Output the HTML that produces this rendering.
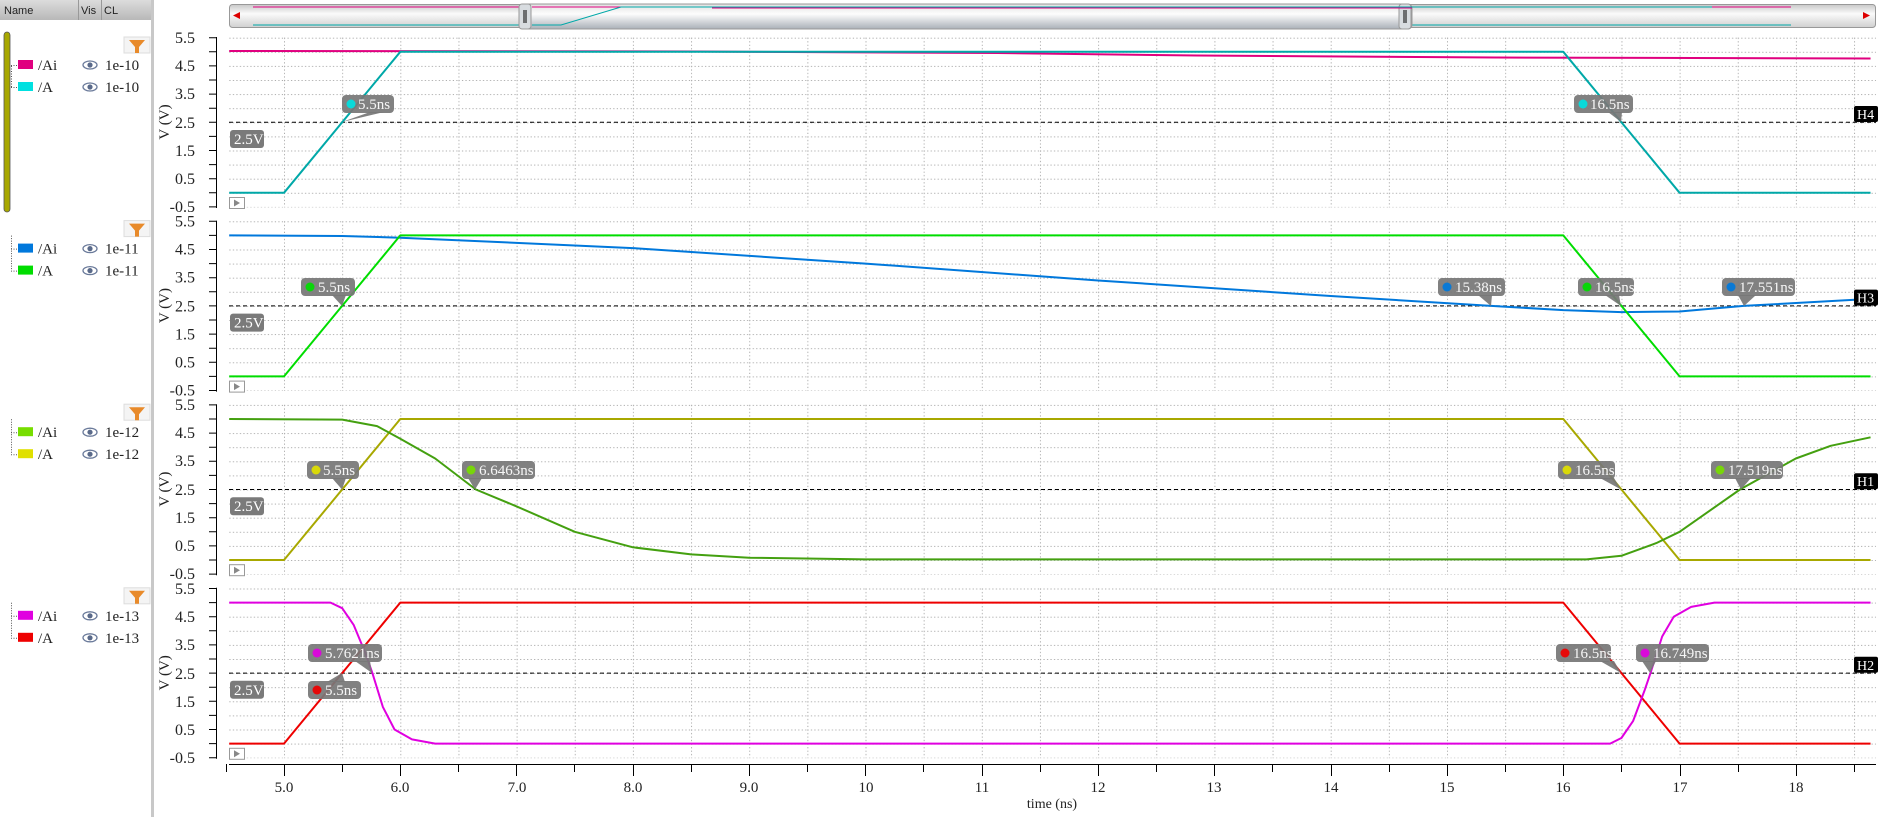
<!DOCTYPE html>
<html><head><meta charset="utf-8">
<style>
html,body{margin:0;padding:0;background:#fff;width:1880px;height:817px;overflow:hidden;font-family:"Liberation Sans",sans-serif}
svg{position:absolute;left:0;top:0}
.yl{font-family:"Liberation Serif",serif;font-size:16px;fill:#222;text-anchor:end}
.xl{font-family:"Liberation Serif",serif;font-size:15px;fill:#222;text-anchor:middle}
.lt{font-family:"Liberation Serif",serif;font-size:15px;fill:#fff}
.lg{font-family:"Liberation Serif",serif;font-size:15px;fill:#222}
</style></head><body>
<svg width="1880" height="817" viewBox="0 0 1880 817">
<defs>
<pattern id="grid" patternUnits="userSpaceOnUse" x="284" y="37.7" width="58.15" height="14.1">
<line x1="0.5" y1="0" x2="0.5" y2="14.1" stroke="#aaa" stroke-width="1" stroke-dasharray="1.2,2.3"/>
<line x1="0" y1="0.5" x2="58.15" y2="0.5" stroke="#aaa" stroke-width="1" stroke-dasharray="1.2,2.3"/>
</pattern>
<pattern id="ytk" patternUnits="userSpaceOnUse" x="0" y="37.2" width="20" height="2.82">
<line x1="212" y1="0.5" x2="216" y2="0.5" stroke="#000" stroke-width="1"/>
</pattern>
<pattern id="xtk" patternUnits="userSpaceOnUse" x="283.5" y="0" width="11.63" height="20">
<line x1="0.5" y1="764" x2="0.5" y2="768" stroke="#000" stroke-width="1"/>
</pattern>
<linearGradient id="hdr" x1="0" y1="0" x2="0" y2="1"><stop offset="0" stop-color="#dcdcdc"/><stop offset="1" stop-color="#b8b8b8"/></linearGradient>
<linearGradient id="sb" x1="0" y1="0" x2="0" y2="1"><stop offset="0" stop-color="#c8c8c8"/><stop offset="0.4" stop-color="#fafafa"/><stop offset="1" stop-color="#d0d0d0"/></linearGradient>
<linearGradient id="th" x1="0" y1="0" x2="0" y2="1"><stop offset="0" stop-color="#e0e0e0"/><stop offset="0.4" stop-color="#fdfdfd"/><stop offset="1" stop-color="#aab0b8"/></linearGradient>
<g id="filt"><rect x="124" y="0" width="26" height="16" fill="#f4f4f4" stroke="#ddd"/><path d="M129 3 L145 3 L139 10 L139 16 L135 16 L135 10 Z" fill="#e88a2a"/></g>
<g id="eye"><ellipse cx="0" cy="0" rx="7" ry="4" fill="#fff" stroke="#6a7a9a" stroke-width="1.3"/><circle cx="0" cy="0" r="2.6" fill="#5a6a8a"/></g>
<g id="play"><rect x="229.5" y="197.5" width="15" height="11" fill="#fff" stroke="#999"/><path d="M234 199.5 L240 203 L234 206.5 Z" fill="#888"/></g>
</defs>

<!-- left panel -->
<rect x="0" y="0" width="152" height="20" fill="url(#hdr)"/>
<line x1="78.5" y1="0" x2="78.5" y2="20" stroke="#999"/>
<line x1="101.5" y1="0" x2="101.5" y2="20" stroke="#999"/>
<text x="4" y="14" font-size="11" fill="#222">Name</text>
<text x="81" y="14" font-size="11" fill="#222">Vis</text>
<text x="104" y="14" font-size="11" fill="#222">CL</text>
<rect x="151" y="0" width="3" height="817" fill="#c8c8c8"/>
<rect x="4" y="32" width="6" height="180" rx="3" fill="#a8a800" stroke="#555" stroke-width="0.8"/>

<!-- legends -->
<g>
<use href="#filt" y="37"/>
<path d="M11 65.5 H18 M11 87.5 H18 M11.5 66 V87" stroke="#555" stroke-dasharray="1,1.5" fill="none"/>
<rect x="18" y="60" width="15" height="9" fill="#e0007f"/><text x="38" y="70" class="lg">/Ai</text>
<use href="#eye" x="90" y="65"/><text x="105" y="70" class="lg">1e-10</text>
<rect x="18" y="82" width="15" height="9" fill="#00e0e0"/><text x="38" y="92" class="lg">/A</text>
<use href="#eye" x="90" y="87"/><text x="105" y="92" class="lg">1e-10</text>
</g>
<g transform="translate(0,183.6)">
<use href="#filt" y="37"/>
<path d="M11 65.5 H18 M11 87.5 H18 M11.5 52 V87" stroke="#555" stroke-dasharray="1,1.5" fill="none"/>
<rect x="18" y="60" width="15" height="9" fill="#0078dc"/><text x="38" y="70" class="lg">/Ai</text>
<use href="#eye" x="90" y="65"/><text x="105" y="70" class="lg">1e-11</text>
<rect x="18" y="82" width="15" height="9" fill="#00dd00"/><text x="38" y="92" class="lg">/A</text>
<use href="#eye" x="90" y="87"/><text x="105" y="92" class="lg">1e-11</text>
</g>
<g transform="translate(0,367.2)">
<use href="#filt" y="37"/>
<path d="M11 65.5 H18 M11 87.5 H18 M11.5 52 V87" stroke="#555" stroke-dasharray="1,1.5" fill="none"/>
<rect x="18" y="60" width="15" height="9" fill="#77dd00"/><text x="38" y="70" class="lg">/Ai</text>
<use href="#eye" x="90" y="65"/><text x="105" y="70" class="lg">1e-12</text>
<rect x="18" y="82" width="15" height="9" fill="#e0e000"/><text x="38" y="92" class="lg">/A</text>
<use href="#eye" x="90" y="87"/><text x="105" y="92" class="lg">1e-12</text>
</g>
<g transform="translate(0,550.8)">
<use href="#filt" y="37"/>
<path d="M11 65.5 H18 M11 87.5 H18 M11.5 52 V87" stroke="#555" stroke-dasharray="1,1.5" fill="none"/>
<rect x="18" y="60" width="15" height="9" fill="#e000e0"/><text x="38" y="70" class="lg">/Ai</text>
<use href="#eye" x="90" y="65"/><text x="105" y="70" class="lg">1e-13</text>
<rect x="18" y="82" width="15" height="9" fill="#ee0000"/><text x="38" y="92" class="lg">/A</text>
<use href="#eye" x="90" y="87"/><text x="105" y="92" class="lg">1e-13</text>
</g>

<!-- scrollbar -->
<rect x="229.5" y="4.5" width="1646" height="23" rx="3" fill="url(#sb)" stroke="#999"/>
<path d="M233 15.5 L240 12 L240 19 Z" fill="#d00"/>
<path d="M1870 15.5 L1863 12 L1863 19 Z" fill="#d00"/>
<line x1="253" y1="7" x2="1791" y2="7" stroke="#e0007f" stroke-width="1"/>
<line x1="253" y1="25" x2="1791" y2="25" stroke="#00a8a8" stroke-width="1"/>
<rect x="520" y="4" width="892" height="25" rx="4" fill="url(#th)" stroke="#999"/>
<rect x="519" y="4" width="12" height="25" rx="3" fill="#d8dce0" stroke="#999"/>
<rect x="1399" y="4" width="12" height="25" rx="3" fill="#d8dce0" stroke="#999"/>
<path d="M524 10V23M526 10V23M1404 10V23M1406 10V23" stroke="#000"/>
<path d="M532 7 H1412" stroke="#e0007f"/>
<path d="M532 25 H561 L621 7 H1712" stroke="#00a8a8" fill="none"/>
<path d="M712 8 H1412" stroke="#e0007f"/>

<!-- axes labels -->
<text transform="translate(169,122) rotate(-90)" class="yl" style="text-anchor:middle;font-size:15px">V (V)</text>
<text transform="translate(169,305.6) rotate(-90)" class="yl" style="text-anchor:middle;font-size:15px">V (V)</text>
<text transform="translate(169,489.2) rotate(-90)" class="yl" style="text-anchor:middle;font-size:15px">V (V)</text>
<text transform="translate(169,672.8) rotate(-90)" class="yl" style="text-anchor:middle;font-size:15px">V (V)</text>

<!-- panels -->
<g id="p0">
<rect x="229" y="37.2" width="1647" height="170.2" fill="url(#grid)"/>
<line x1="216.5" y1="37" x2="216.5" y2="208" stroke="#000"/>
<rect x="196" y="37.2" width="21" height="170.5" fill="url(#ytk)"/>
<path d="M209 37.7H216M209 51.8H216M209 65.9H216M209 80H216M209 94.1H216M209 108.2H216M209 122.3H216M209 136.4H216M209 150.5H216M209 164.6H216M209 178.7H216M209 192.8H216M209 206.9H216" stroke="#000"/>
<g class="yl"><text x="195" y="43">5.5</text><text x="195" y="71">4.5</text><text x="195" y="99">3.5</text><text x="195" y="128">2.5</text><text x="195" y="156">1.5</text><text x="195" y="184">0.5</text><text x="195" y="212">-0.5</text></g>
<line x1="229" y1="122.3" x2="1876" y2="122.3" stroke="#000" stroke-dasharray="4,3"/>
<use href="#play"/>
</g>
<use href="#p0" y="183.6"/>
<use href="#p0" y="367.2"/>
<use href="#p0" y="550.8"/>

<!-- curves -->
<g fill="none" stroke-width="2" stroke-linejoin="round" transform="translate(284,0) scale(0.99657,1) translate(-284,0)">
<polyline stroke="#e0007f" points="229,51 700,51.5 1000,53 1200,55.5 1500,57.5 1876,58.5"/>
<polyline stroke="#00a8a8" points="229,192.8 284,192.8 400.7,51.8 1567.7,51.8 1684.4,192.8 1876,192.8"/>
<g transform="translate(0,183.6)">
<polyline stroke="#0078dc" points="229,51.8 342.4,52.4 400.7,54.1 634.1,64.5 867.5,80 1100.9,96.9 1334.3,112.4 1495.3,122.3 1567.7,126.5 1626,128.5 1684.4,127.9 1748.6,122.3 1876,115.3"/>
<polyline stroke="#00dd00" points="229,192.8 284,192.8 400.7,51.8 1567.7,51.8 1684.4,192.8 1876,192.8"/>
</g>
<g transform="translate(0,367.2)">
<polyline stroke="#a8a800" points="229,192.8 284,192.8 400.7,51.8 1567.7,51.8 1684.4,192.8 1876,192.8"/>
<polyline stroke="#44a010" points="229,51.8 342.4,52.4 377.4,58.9 400.7,71.5 435.7,91.3 476.5,122.3 517.4,139.2 575.8,164.6 634.1,180.1 692.5,187.2 750.8,190.5 867.5,192.2 1591,192.2 1626,188.6 1661,175.9 1684.4,164.6 1745,122.3 1801,91.3 1836,78.6 1876,70.1"/>
</g>
<g transform="translate(0,550.8)">
<polyline stroke="#ee0000" points="229,192.8 284,192.8 400.7,51.8 1567.7,51.8 1684.4,192.8 1876,192.8"/>
<polyline stroke="#e000e0" points="229,51.8 330.7,51.8 342.4,57.4 354,74.3 365.7,102.5 372.7,122.3 383.2,156.1 394.9,178.7 412.4,188.6 435.7,192.8 1614.7,192.8 1626,187.2 1637.7,170.3 1649.4,139.2 1655.2,122.3 1666.9,85.7 1678.5,65.9 1696,56.1 1719.4,51.8 1876,51.8"/>
</g>
</g>

<!-- 2.5V boxes & H boxes -->
<g id="vb"><rect x="230" y="130" width="34" height="18" rx="3" fill="#7a7a7a"/><text x="234" y="144" class="lt">2.5V</text></g>
<use href="#vb" y="183.6"/><use href="#vb" y="367.2"/><use href="#vb" y="550.8"/>
<g font-family="Liberation Serif,serif" font-size="14" fill="#fff">
<rect x="1854" y="106" width="24" height="16" rx="2" fill="#000"/><text x="1857" y="119">H4</text>
<rect x="1854" y="289.6" width="24" height="16" rx="2" fill="#000"/><text x="1857" y="302.6">H3</text>
<rect x="1854" y="473.2" width="24" height="16" rx="2" fill="#000"/><text x="1857" y="486.2">H1</text>
<rect x="1854" y="656.8" width="24" height="16" rx="2" fill="#000"/><text x="1857" y="669.8">H2</text>
</g>

<!-- marker labels -->
<g fill-opacity="0.93">
<!-- panel0 -->
<path d="M370 112 L384 112 L342 122 Z" fill="#777"/>
<rect x="342" y="95" width="52" height="18" rx="4" fill="#777"/><circle cx="351" cy="104" r="4.5" fill="#00e0e0"/><text x="358" y="109" class="lt">5.5ns</text>
<path d="M1608 112 L1622 112 L1621 122 Z" fill="#777"/>
<rect x="1574" y="95" width="59" height="18" rx="4" fill="#777"/><circle cx="1583" cy="104" r="4.5" fill="#00e0e0"/><text x="1590" y="109" class="lt">16.5ns</text>
<!-- panel1 -->
<path d="M332 295 L346 295 L342 306 Z" fill="#777"/>
<rect x="301" y="278" width="54" height="18" rx="4" fill="#777"/><circle cx="310" cy="287" r="4.5" fill="#00dd00"/><text x="318" y="292" class="lt">5.5ns</text>
<path d="M1478 295 L1492 295 L1491 306 Z" fill="#777"/>
<rect x="1438" y="278" width="67" height="18" rx="4" fill="#777"/><circle cx="1447" cy="287" r="4.5" fill="#0078dc"/><text x="1455" y="292" class="lt">15.38ns</text>
<path d="M1605 295 L1619 295 L1621 306 Z" fill="#777"/>
<rect x="1578" y="278" width="56" height="18" rx="4" fill="#777"/><circle cx="1587" cy="287" r="4.5" fill="#00dd00"/><text x="1595" y="292" class="lt">16.5ns</text>
<path d="M1738 295 L1756 295 L1744 306 Z" fill="#777"/>
<rect x="1722" y="278" width="73" height="18" rx="4" fill="#777"/><circle cx="1731" cy="287" r="4.5" fill="#0078dc"/><text x="1739" y="292" class="lt">17.551ns</text>
<!-- panel2 -->
<path d="M332 478 L346 478 L342 489.5 Z" fill="#777"/>
<rect x="307" y="461" width="52" height="18" rx="4" fill="#777"/><circle cx="316" cy="470" r="4.5" fill="#e0e000"/><text x="323" y="475" class="lt">5.5ns</text>
<path d="M468 478 L482 478 L475 489.5 Z" fill="#777"/>
<rect x="462" y="461" width="73" height="18" rx="4" fill="#777"/><circle cx="471" cy="470" r="4.5" fill="#77dd00"/><text x="479" y="475" class="lt">6.6463ns</text>
<path d="M1600 478 L1614 478 L1621 489.5 Z" fill="#777"/>
<rect x="1558" y="461" width="57" height="18" rx="4" fill="#777"/><circle cx="1567" cy="470" r="4.5" fill="#e0e000"/><text x="1575" y="475" class="lt">16.5ns</text>
<path d="M1735 478 L1751 478 L1741 489.5 Z" fill="#777"/>
<rect x="1711" y="461" width="72" height="18" rx="4" fill="#777"/><circle cx="1720" cy="470" r="4.5" fill="#77dd00"/><text x="1728" y="475" class="lt">17.519ns</text>
<!-- panel3 -->
<path d="M355 661 L370 661 L372 673 Z" fill="#777"/>
<rect x="308" y="644" width="74" height="18" rx="4" fill="#777"/><circle cx="317" cy="653" r="4.5" fill="#e000e0"/><text x="325" y="658" class="lt">5.7621ns</text>
<path d="M327 682 L345 682 L342 673 Z" fill="#777"/>
<rect x="308" y="681" width="53" height="18" rx="4" fill="#777"/><circle cx="317" cy="690" r="4.5" fill="#ee0000"/><text x="325" y="695" class="lt">5.5ns</text>
<path d="M1600 661 L1614 661 L1621 673 Z" fill="#777"/>
<rect x="1556" y="644" width="55" height="18" rx="4" fill="#777"/><circle cx="1565" cy="653" r="4.5" fill="#ee0000"/><text x="1573" y="658" class="lt">16.5ns</text>
<path d="M1642 661 L1656 661 L1650 673 Z" fill="#777"/>
<rect x="1636" y="644" width="73" height="18" rx="4" fill="#777"/><circle cx="1645" cy="653" r="4.5" fill="#e000e0"/><text x="1653" y="658" class="lt">16.749ns</text>
</g>

<!-- x axis -->
<line x1="229" y1="764.5" x2="1876" y2="764.5" stroke="#000"/>
<rect x="229" y="764" width="1647" height="5" fill="url(#xtk)"/>
<path d="M226.5 764V772M342.5 764V772M458.5 764V772M574.5 764V772M691.5 764V772M807.5 764V772M923.5 764V772M1040.5 764V772M1156.5 764V772M1272.5 764V772M1389.5 764V772M1505.5 764V772M1621.5 764V772M1738.5 764V772M1854.5 764V772" stroke="#000"/>
<path d="M284.5 764V776M400.5 764V776M516.5 764V776M633.5 764V776M749.5 764V776M865.5 764V776M982.5 764V776M1098.5 764V776M1214.5 764V776M1331.5 764V776M1447.5 764V776M1563.5 764V776M1680.5 764V776M1796.5 764V776" stroke="#000"/>
<g class="xl">
<text x="284" y="792">5.0</text><text x="400" y="792">6.0</text><text x="517" y="792">7.0</text><text x="633" y="792">8.0</text><text x="749" y="792">9.0</text><text x="866" y="792">10</text><text x="982" y="792">11</text><text x="1098" y="792">12</text><text x="1214" y="792">13</text><text x="1331" y="792">14</text><text x="1447" y="792">15</text><text x="1563" y="792">16</text><text x="1680" y="792">17</text><text x="1796" y="792">18</text>
<text x="1052" y="808" style="font-size:14px">time (ns)</text>
</g>
</svg>
</body></html>
